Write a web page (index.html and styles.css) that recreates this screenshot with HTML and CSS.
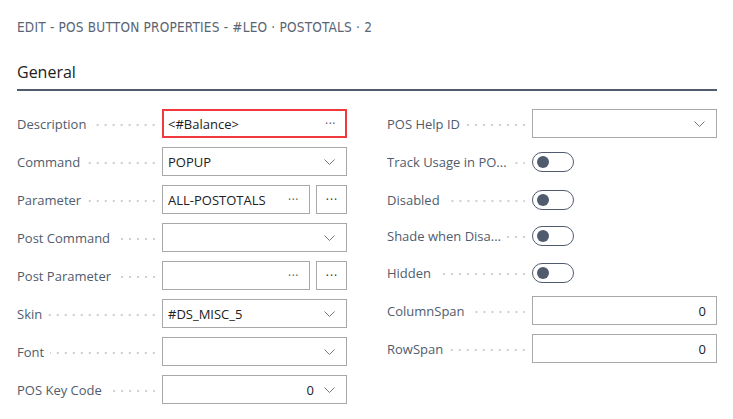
FILE: index.html
```html
<!DOCTYPE html>
<html lang="en">
<head>
<meta charset="utf-8">
<title>Edit - POS Button Properties</title>
<link rel="stylesheet" href="styles.css">
</head>
<body>
<div class="page">
  <div class="title">EDIT - POS BUTTON PROPERTIES - #LEO · POSTOTALS · 2</div>
  <div class="section-head">General</div>
  <div class="grid">
    <div class="col">
      <div class="row"><div class="label"><span>Description</span><i></i></div>
        <div class="ctrl"><div class="box focus"><span class="val">&lt;#Balance&gt;</span><span class="ell">···</span></div></div></div>
      <div class="row"><div class="label"><span>Command</span><i></i></div>
        <div class="ctrl"><div class="box"><span class="val">POPUP</span><svg class="chev" viewBox="0 0 11 6"><path d="M0.5 0.5 L5.5 5.5 L10.5 0.5"/></svg></div></div></div>
      <div class="row"><div class="label"><span>Parameter</span><i></i></div>
        <div class="ctrl"><div class="box"><span class="val">ALL-POSTOTALS</span><span class="ell">···</span></div><div class="btn">···</div></div></div>
      <div class="row"><div class="label"><span>Post Command</span><i></i></div>
        <div class="ctrl"><div class="box"><span class="val"></span><svg class="chev" viewBox="0 0 11 6"><path d="M0.5 0.5 L5.5 5.5 L10.5 0.5"/></svg></div></div></div>
      <div class="row"><div class="label"><span>Post Parameter</span><i></i></div>
        <div class="ctrl"><div class="box"><span class="val"></span><span class="ell">···</span></div><div class="btn">···</div></div></div>
      <div class="row"><div class="label"><span>Skin</span><i></i></div>
        <div class="ctrl"><div class="box"><span class="val">#DS_MISC_5</span><svg class="chev" viewBox="0 0 11 6"><path d="M0.5 0.5 L5.5 5.5 L10.5 0.5"/></svg></div></div></div>
      <div class="row"><div class="label"><span>Font</span><i></i></div>
        <div class="ctrl"><div class="box"><span class="val"></span><svg class="chev" viewBox="0 0 11 6"><path d="M0.5 0.5 L5.5 5.5 L10.5 0.5"/></svg></div></div></div>
      <div class="row"><div class="label"><span>POS Key Code</span><i></i></div>
        <div class="ctrl"><div class="box"><span class="val num">0</span><svg class="chev" viewBox="0 0 11 6"><path d="M0.5 0.5 L5.5 5.5 L10.5 0.5"/></svg></div></div></div>
    </div>
    <div class="col">
      <div class="row"><div class="label"><span>POS Help ID</span><i></i></div>
        <div class="ctrl"><div class="box"><span class="val"></span><svg class="chev" viewBox="0 0 11 6"><path d="M0.5 0.5 L5.5 5.5 L10.5 0.5"/></svg></div></div></div>
      <div class="row"><div class="label"><span>Track Usage in PO...</span><i></i></div>
        <div class="ctrl"><div class="toggle"><b></b></div></div></div>
      <div class="row tight"><div class="label"><span>Disabled</span><i></i></div>
        <div class="ctrl"><div class="toggle"><b></b></div></div></div>
      <div class="row short"><div class="label"><span>Shade when Disa...</span><i></i></div>
        <div class="ctrl"><div class="toggle"><b></b></div></div></div>
      <div class="row short last"><div class="label"><span>Hidden</span><i></i></div>
        <div class="ctrl"><div class="toggle"><b></b></div></div></div>
      <div class="row"><div class="label"><span>ColumnSpan</span><i></i></div>
        <div class="ctrl"><div class="box"><span class="val num">0</span></div></div></div>
      <div class="row"><div class="label"><span>RowSpan</span><i></i></div>
        <div class="ctrl"><div class="box"><span class="val num">0</span></div></div></div>
    </div>
  </div>
</div>
</body>
</html>
```
FILE: styles.css
```css
html, body {
  margin: 0;
  padding: 0;
  background: #ffffff;
}
body {
  font-family: "Open Sans", "Noto Sans", sans-serif;
  font-size: 13px;
  color: #212121;
}
.page {
  padding: 19px 16px 0 17px;
}
.title {
  font-family: "DejaVu Sans Condensed", "DejaVu Sans", sans-serif;
  font-size: 13.5px;
  line-height: 17px;
  color: #5a6473;
  letter-spacing: 0.2px;
}
.section-head {
  margin-top: 25px;
  font-size: 16px;
  line-height: 22px;
  color: #212121;
  padding-bottom: 6px;
  border-bottom: 2px solid #505c6d;
}
.grid {
  display: grid;
  grid-template-columns: 330px 330px;
  column-gap: 40px;
  margin-top: 18px;
}
.col {
  display: flex;
  flex-direction: column;
}
.row {
  display: grid;
  grid-template-columns: 145px 1fr;
  height: 29px;
  margin-bottom: 9px;
  align-items: center;
}
.row.tight {
  margin-bottom: 7px;
}
.row.short {
  height: 28px;
}
.row.last {
  margin-bottom: 10px;
}
.label {
  display: flex;
  align-items: center;
  color: #505c6d;
  white-space: nowrap;
  overflow: hidden;
  padding-right: 7px;
}
.label i {
  flex: 1;
  height: 2px;
  margin: 2px 0 0 6px;
  background-image: linear-gradient(to right, transparent 6px, #cdd0d4 6px);
  background-size: 8px 2px;
  background-repeat: repeat-x;
  background-position: right center;
}
.ctrl {
  display: flex;
  gap: 6px;
  height: 29px;
}
.box {
  flex: 1;
  box-sizing: border-box;
  height: 29px;
  border: 1px solid #a8a8a8;
  display: flex;
  align-items: center;
  padding: 0 10px 0 5px;
  min-width: 0;
}
.box.focus {
  border: 2px solid #f0393c;
  padding-left: 4px;
  padding-right: 9px;
}
.val {
  flex: 1;
  color: #212121;
}
.val.num {
  text-align: right;
}
.ell {
  color: #605e5c;
  font-size: 12px;
  letter-spacing: 0.5px;
}
.chev {
  width: 11px;
  height: 6px;
  margin-left: 10px;
  margin-right: 1px;
  fill: none;
  stroke: #797775;
  stroke-width: 1;
}
.btn {
  width: 31px;
  box-sizing: border-box;
  border: 1px solid #a8a8a8;
  display: flex;
  align-items: center;
  justify-content: center;
  color: #323130;
  font-size: 12px;
  letter-spacing: 1px;
  padding-left: 1px;
}
.toggle {
  box-sizing: border-box;
  width: 42px;
  height: 20px;
  border: 1px solid #505c6d;
  border-radius: 10px;
  display: flex;
  align-items: center;
  padding-left: 4px;
  align-self: center;
}
.toggle b {
  width: 12px;
  height: 12px;
  border-radius: 50%;
  background: #505c6d;
}
```
